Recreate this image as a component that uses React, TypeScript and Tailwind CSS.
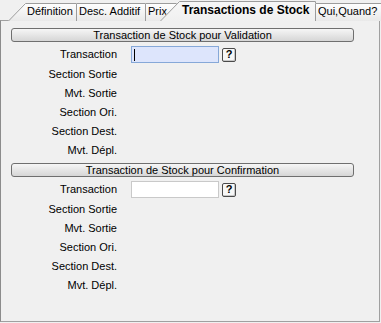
import React from 'react'

const font = { fontFamily: '"Liberation Sans", Arial, sans-serif' }

const rows = ['Section Sortie', 'Mvt. Sortie', 'Section Ori.', 'Section Dest.', 'Mvt. Dépl.']

function TabShape({ id, w, h, slant, active }: { id: string; w: number; h: number; slant: number; active?: boolean }) {
  const pts = `${0},${h} ${slant},0 ${w},0 ${w},${h}`
  const line = `M0.5 ${h} L${slant + 0.5} 0.5 H${w - 0.5} V${h}`
  return (
    <svg className="absolute inset-0" width={w} height={h} viewBox={`0 0 ${w} ${h}`}>
      <defs>
        <linearGradient id={id} x1="0" y1="0" x2="0" y2="1">
          <stop offset="0" stopColor={active ? '#f7f7f7' : '#ffffff'} />
          <stop offset="1" stopColor={active ? '#f0f0f0' : '#e9e9e9'} />
        </linearGradient>
      </defs>
      <polygon points={pts} fill={`url(#${id})`} />
      <path d={line} fill="none" stroke="#9c9c9c" strokeWidth="1" />
    </svg>
  )
}

function Tab({ id, w, h, slant, label, pad, active, className = '' }: { id: string; w: number; h: number; slant: number; label: string; pad: number; active?: boolean; className?: string }) {
  return (
    <div className={`relative shrink-0 ${className}`} style={{ width: w, height: h }}>
      <TabShape id={id} w={w} h={h} slant={slant} active={active} />
      <span
        className={`absolute top-0 whitespace-nowrap text-black ${active ? 'text-[12px] font-bold leading-[18px]' : 'text-[11px] leading-[17px]'}`}
        style={{ left: pad }}
      >
        {label}
      </span>
    </div>
  )
}

function Section({ title, focused }: { title: string; focused?: boolean }) {
  return (
    <div className="flex flex-col">
      <div className="w-[343px] h-[14px] rounded-[3px] border border-[#6f6f6f] bg-gradient-to-b from-[#f6f6f6] to-[#d6d6d6] flex items-center justify-center text-[11px] leading-none text-black">
        {title}
      </div>
      <div className="mt-[2px] h-[21px] flex items-center">
        <div className="w-[106px] text-right text-[11px] text-black">Transaction</div>
        <div
          className={`ml-[14px] w-[88px] h-[17px] border flex items-center ${
            focused ? 'bg-[#dde5fc] border-[#86a8d8]' : 'bg-white border-[#c9c9c9]'
          }`}
        >
          {focused && <div className="ml-[2px] w-px h-[12px] bg-black" />}
        </div>
        <div className="ml-[3px] w-[14px] h-[14px] rounded-[2px] border border-[#4a4a4a] bg-[#f7f7f7] shadow-[inset_-1px_-1px_0_#c8c8c8] flex items-center justify-center text-[11px] font-bold leading-none text-black">
          ?
        </div>
      </div>
      {rows.map((r) => (
        <div key={r} className="h-[19px] flex items-center">
          <div className="w-[106px] text-right text-[11px] text-black">{r}</div>
        </div>
      ))}
    </div>
  )
}

export default function App() {
  return (
    <div className="w-[381px] h-[323px] bg-[#f0f0f0] overflow-hidden" style={font}>
      {/* Tab strip */}
      <div className="relative z-10 flex items-end h-[21px] -mb-px pl-[8px]">
        <Tab id="t1" w={69} h={18} slant={17} label="Définition" pad={19} />
        <Tab id="t2" w={70} h={18} slant={0} label="Desc. Additif" pad={3} className="-ml-px" />
        <Tab id="t3" w={34} h={18} slant={0} label="Prix" pad={3} className="-ml-px" />
        <Tab id="t4" w={156} h={20} slant={19} label="Transactions de Stock" pad={22} active className="-ml-[19px]" />
        <Tab id="t5" w={70} h={18} slant={0} label="Qui,Quand?" pad={3} className="-ml-px" />
      </div>

      {/* Panel */}
      <div className="w-[380px] h-[302px] border border-[#a0a0a0] border-l-[#8c8c8c] bg-[#f0f0f0] pl-[10px] pt-[7px]">
        <Section title="Transaction de Stock pour Validation" focused />
        <div className="mt-[3px]">
          <Section title="Transaction de Stock pour Confirmation" />
        </div>
      </div>
    </div>
  )
}
